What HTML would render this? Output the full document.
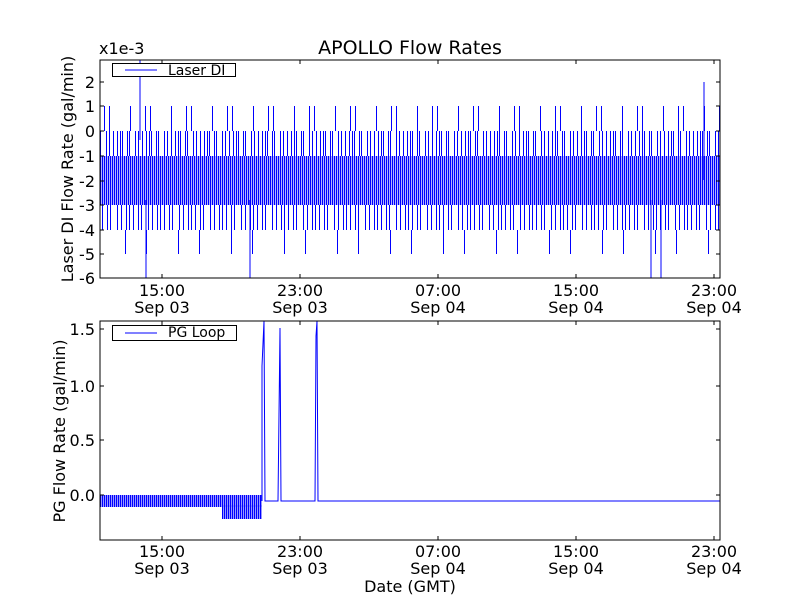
<!DOCTYPE html>
<html><head><style>body{margin:0;background:#fff}svg{display:block}text{font-family:"DejaVu Sans","Liberation Sans",sans-serif;fill:#000}</style></head><body>
<svg width="800" height="600" viewBox="0 0 800 600" xmlns="http://www.w3.org/2000/svg">
<defs>
<pattern id="p2" width="2" height="10" patternUnits="userSpaceOnUse"><rect x="0" y="0" width="1.3" height="10" fill="#00f"/></pattern>
<pattern id="p7" width="29" height="10" patternUnits="userSpaceOnUse"><rect x="1" width="1" height="10" fill="#00f"/><rect x="4" width="1" height="10" fill="#00f"/><rect x="6" width="1" height="10" fill="#00f"/><rect x="11" width="1" height="10" fill="#00f"/><rect x="13" width="1" height="10" fill="#00f"/><rect x="19" width="1" height="10" fill="#00f"/><rect x="22" width="1" height="10" fill="#00f"/><rect x="26" width="1" height="10" fill="#00f"/></pattern>
<pattern id="p11" width="31" height="10" patternUnits="userSpaceOnUse"><rect x="2" width="1" height="10" fill="#00f"/><rect x="5" width="1" height="10" fill="#00f"/><rect x="9" width="1" height="10" fill="#00f"/><rect x="14" width="1" height="10" fill="#00f"/><rect x="17" width="1" height="10" fill="#00f"/><rect x="24" width="1" height="10" fill="#00f"/><rect x="28" width="1" height="10" fill="#00f"/></pattern>
<pattern id="p23" width="41" height="10" patternUnits="userSpaceOnUse"><rect x="7" width="1" height="10" fill="#00f"/><rect x="22" width="1" height="10" fill="#00f"/><rect x="27" width="1" height="10" fill="#00f"/></pattern>
<pattern id="p37" width="53" height="10" patternUnits="userSpaceOnUse"><rect x="19" width="1" height="10" fill="#00f"/><rect x="40" width="1" height="10" fill="#00f"/></pattern>
<pattern id="n2" width="2" height="10" patternUnits="userSpaceOnUse"><rect width="1.4" height="10" fill="#00f"/></pattern>
</defs>
<rect x="100" y="156" width="620" height="49" fill="url(#p2)"/>
<rect x="100" y="131" width="620" height="25" fill="url(#p7)"/>
<rect x="100" y="205" width="620" height="25" fill="url(#p11)"/>
<rect x="100" y="106" width="620" height="25" fill="url(#p23)"/>
<rect x="100" y="230" width="620" height="24" fill="url(#p37)"/>
<path d="M140 60V140M146 200V278M250 200V278M651 200V278M661 200V278M704 82V180" stroke="#00f" stroke-width="1"/>
<rect x="100" y="60" width="620" height="218" fill="none" stroke="#000" stroke-width="1"/>
<rect x="112.5" y="63.5" width="123" height="13" fill="#fff" stroke="#000"/>
<line x1="125" y1="70" x2="157" y2="70" stroke="#00f"/>
<text x="168" y="75" font-size="14">Laser DI</text>
<g stroke="#000"><path d="M100 82h4M100 106h4M100 131h4M100 156h4M100 181h4M100 205h4M100 230h4M100 254h4M720 82h-4M720 106h-4M720 131h-4M720 156h-4M720 181h-4M720 205h-4M720 230h-4M720 254h-4M162 278v-4M300 278v-4M438 278v-4M576 278v-4M714 278v-4M162 60v4M300 60v4M438 60v4M576 60v4M714 60v4"/></g>
<g font-size="16" text-anchor="end"><text x="95" y="88">2</text><text x="95" y="112">1</text><text x="95" y="137">0</text><text x="95" y="162">-1</text><text x="95" y="187">-2</text><text x="95" y="211">-3</text><text x="95" y="236">-4</text><text x="95" y="260">-5</text><text x="95" y="284">-6</text></g>
<g font-size="16" text-anchor="middle"><text x="162" y="296">15:00</text><text x="162" y="313">Sep 03</text><text x="300" y="296">23:00</text><text x="300" y="313">Sep 03</text><text x="438" y="296">07:00</text><text x="438" y="313">Sep 04</text><text x="576" y="296">15:00</text><text x="576" y="313">Sep 04</text><text x="714" y="296">23:00</text><text x="714" y="313">Sep 04</text></g>
<text x="99" y="54" font-size="16">x1e-3</text>
<text x="410" y="54" font-size="19" text-anchor="middle">APOLLO Flow Rates</text>
<text transform="translate(73 169) rotate(-90)" font-size="16" text-anchor="middle">Laser DI Flow Rate (gal/min)</text>
<rect x="100" y="495" width="162" height="12" fill="url(#n2)"/>
<rect x="222" y="505" width="40" height="14" fill="url(#n2)"/>
<path d="M262 501V366L264 321L265 501H278L280 328L281 501H315L316 336L317 321L318 501H720" fill="none" stroke="#00f" stroke-width="1"/>
<rect x="100" y="321" width="620" height="219" fill="none" stroke="#000"/>
<rect x="112.5" y="325.5" width="124" height="15" fill="#fff" stroke="#000"/>
<line x1="125" y1="333" x2="157" y2="333" stroke="#00f"/>
<text x="168" y="337" font-size="14">PG Loop</text>
<g stroke="#000"><path d="M100 329h4M100 386h4M100 440h4M100 495h4M720 329h-4M720 386h-4M720 440h-4M720 495h-4M162 540v-4M300 540v-4M438 540v-4M576 540v-4M714 540v-4M162 321v4M300 321v4M438 321v4M576 321v4M714 321v4"/></g>
<g font-size="16" text-anchor="end"><text x="95" y="335">1.5</text><text x="95" y="392">1.0</text><text x="95" y="446">0.5</text><text x="95" y="501">0.0</text></g>
<g font-size="16" text-anchor="middle"><text x="162" y="557">15:00</text><text x="162" y="574">Sep 03</text><text x="300" y="557">23:00</text><text x="300" y="574">Sep 03</text><text x="438" y="557">07:00</text><text x="438" y="574">Sep 04</text><text x="576" y="557">15:00</text><text x="576" y="574">Sep 04</text><text x="714" y="557">23:00</text><text x="714" y="574">Sep 04</text><text x="410" y="592">Date (GMT)</text></g>
<text transform="translate(65 431) rotate(-90)" font-size="16" text-anchor="middle">PG Flow Rate (gal/min)</text>
</svg>
</body></html>
